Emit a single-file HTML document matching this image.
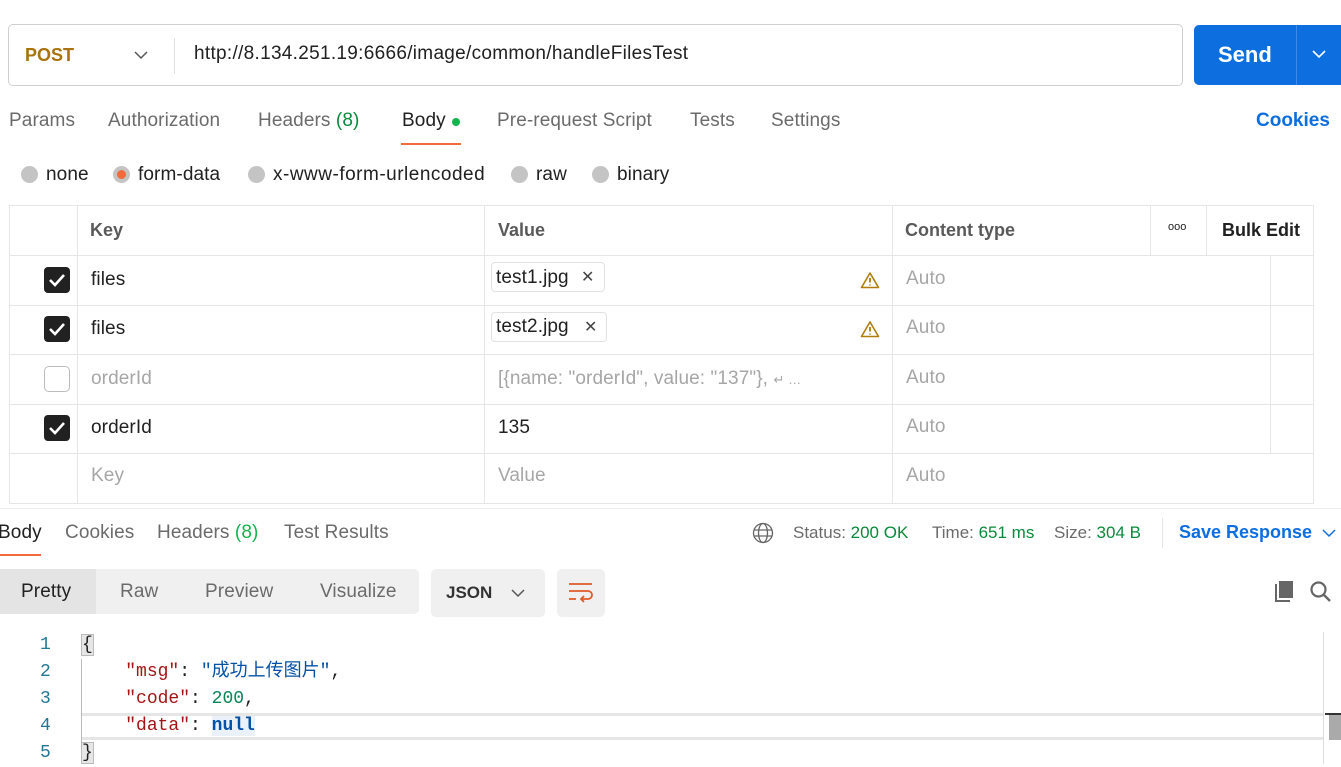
<!DOCTYPE html>
<html><head><meta charset="utf-8"><style>
*{box-sizing:border-box;margin:0;padding:0}
body{width:1341px;height:764px;overflow:hidden;background:#fff;font-family:"Liberation Sans","Noto Sans CJK SC",sans-serif;color:#212121;position:relative}
.a{position:absolute;white-space:nowrap}
.g{color:#6b6b6b}
.gr{color:#0a8a3a}
.ph{color:#a6a6a6}
.cb{position:absolute;width:26px;height:26px;border-radius:4px;background:#212121}
.cb svg{position:absolute;left:4px;top:5px}
.hl{position:absolute;background:#e6e6e6}
.mono{font-family:"Liberation Mono","Noto Sans CJK SC",monospace;font-size:18px}
.t{font-size:19px;letter-spacing:0.1px}
</style></head><body>
<div class="a" style="left:8px;top:24px;width:1175px;height:62px;border:1px solid #d0d0d0;border-radius:5px"></div>
<div class="a" style="left:25px;top:45px;font-size:18px;font-weight:bold;color:#a8720c">POST</div>
<svg class="a" style="left:134px;top:50px" width="14" height="10"><path d="M1 2 L7 8 L13 2" fill="none" stroke="#555" stroke-width="1.5"/></svg>
<div class="a" style="left:174px;top:38px;width:1px;height:36px;background:#e0e0e0"></div>
<div class="a t" style="left:194px;top:43px;letter-spacing:0.3px">http://8.134.251.19:6666/image/common/handleFilesTest</div>
<div class="a" style="left:1194px;top:25px;width:147px;height:60px;background:#0d6ee0;border-radius:5px 0 0 5px"></div>
<div class="a" style="left:1218px;top:42px;font-size:22px;font-weight:bold;color:#fff">Send</div>
<div class="a" style="left:1296px;top:25px;width:1px;height:60px;background:#3d8ae8"></div>
<svg class="a" style="left:1312px;top:49px" width="14" height="10"><path d="M1 2 L7 8 L13 2" fill="none" stroke="#fff" stroke-width="1.6"/></svg>
<div class="a g t" style="left:9px;top:110px">Params</div>
<div class="a g t" style="left:108px;top:110px">Authorization</div>
<div class="a g t" style="left:258px;top:110px">Headers <span class="gr">(8)</span></div>
<div class="a t" style="left:402px;top:110px">Body</div>
<div class="a" style="left:452px;top:118px;width:8px;height:8px;border-radius:50%;background:#12b54b"></div>
<div class="a" style="left:401px;top:143px;width:60px;height:2px;background:#f26b3a"></div>
<div class="a g t" style="left:497px;top:110px">Pre-request Script</div>
<div class="a g t" style="left:690px;top:110px">Tests</div>
<div class="a g t" style="left:771px;top:110px">Settings</div>
<div class="a" style="left:1256px;top:110px;font-size:19px;font-weight:bold;color:#0d6ee0">Cookies</div>
<div class="a" style="left:21px;top:166px;width:17px;height:17px;border-radius:50%;background:#c4c4c4"></div>
<div class="a t" style="left:46px;top:164px">none</div>
<div class="a" style="left:113px;top:166px;width:17px;height:17px;border-radius:50%;background:#c4c4c4"></div>
<div class="a" style="left:117px;top:170px;width:9px;height:9px;border-radius:50%;background:#f26b3a"></div>
<div class="a t" style="left:138px;top:164px">form-data</div>
<div class="a" style="left:248px;top:166px;width:17px;height:17px;border-radius:50%;background:#c4c4c4"></div>
<div class="a t" style="left:273px;top:164px;letter-spacing:0.5px">x-www-form-urlencoded</div>
<div class="a" style="left:511px;top:166px;width:17px;height:17px;border-radius:50%;background:#c4c4c4"></div>
<div class="a t" style="left:536px;top:164px">raw</div>
<div class="a" style="left:592px;top:166px;width:17px;height:17px;border-radius:50%;background:#c4c4c4"></div>
<div class="a t" style="left:617px;top:164px">binary</div>
<div class="a" style="left:9px;top:205px;width:1305px;height:299px;border:1px solid #e6e6e6"></div>
<div class="hl" style="left:9px;top:255px;width:1305px;height:1px"></div>
<div class="hl" style="left:9px;top:305px;width:1305px;height:1px"></div>
<div class="hl" style="left:9px;top:354px;width:1305px;height:1px"></div>
<div class="hl" style="left:9px;top:404px;width:1305px;height:1px"></div>
<div class="hl" style="left:9px;top:453px;width:1305px;height:1px"></div>
<div class="hl" style="left:77px;top:205px;width:1px;height:299px"></div>
<div class="hl" style="left:484px;top:205px;width:1px;height:299px"></div>
<div class="hl" style="left:892px;top:205px;width:1px;height:299px"></div>
<div class="hl" style="left:1150px;top:205px;width:1px;height:50px"></div>
<div class="hl" style="left:1206px;top:205px;width:1px;height:50px"></div>
<div class="hl" style="left:1270px;top:255px;width:1px;height:198px"></div>
<div class="a" style="left:90px;top:220px;font-size:18px;font-weight:bold;color:#5a5a5a">Key</div>
<div class="a" style="left:498px;top:220px;font-size:18px;font-weight:bold;color:#5a5a5a">Value</div>
<div class="a" style="left:905px;top:220px;font-size:18px;font-weight:bold;color:#5a5a5a">Content type</div>
<div class="a" style="left:1168px;top:221px;font-size:11px;letter-spacing:0px;color:#222">ooo</div>
<div class="a" style="left:1222px;top:220px;font-size:18px;font-weight:bold">Bulk Edit</div>
<div class="cb" style="left:44px;top:267px"><svg width="18" height="16"><path d="M2 8 L7 13 L16 3" fill="none" stroke="#fff" stroke-width="2.6"/></svg></div>
<div class="a t" style="left:91px;top:269px">files</div>
<div class="a" style="left:491px;top:262px;width:114px;height:30px;border:1px solid #e2e2e2;border-radius:4px"></div>
<div class="a t" style="left:496px;top:267px">test1.jpg</div>
<div class="a" style="left:581px;top:267px;font-size:16px;color:#444">✕</div>
<div class="cb" style="left:44px;top:316px"><svg width="18" height="16"><path d="M2 8 L7 13 L16 3" fill="none" stroke="#fff" stroke-width="2.6"/></svg></div>
<div class="a t" style="left:91px;top:318px">files</div>
<div class="a" style="left:491px;top:312px;width:116px;height:30px;border:1px solid #e2e2e2;border-radius:4px"></div>
<div class="a t" style="left:496px;top:316px">test2.jpg</div>
<div class="a" style="left:584px;top:317px;font-size:16px;color:#444">✕</div>
<svg class="a" style="left:860px;top:271px" width="20" height="18"><path d="M10 2 L18.5 16.5 H1.5 Z" fill="none" stroke="#b07d0c" stroke-width="1.6" stroke-linejoin="round"/><path d="M10 7 V11.5 M10 13.5 V14.5" stroke="#b07d0c" stroke-width="1.8"/></svg>
<svg class="a" style="left:860px;top:320px" width="20" height="18"><path d="M10 2 L18.5 16.5 H1.5 Z" fill="none" stroke="#b07d0c" stroke-width="1.6" stroke-linejoin="round"/><path d="M10 7 V11.5 M10 13.5 V14.5" stroke="#b07d0c" stroke-width="1.8"/></svg>
<div class="a ph t" style="left:906px;top:268px">Auto</div>
<div class="a ph t" style="left:906px;top:317px">Auto</div>
<div class="a" style="left:44px;top:366px;width:26px;height:26px;border-radius:5px;border:1px solid #bbb"></div>
<div class="a ph t" style="left:91px;top:368px">orderId</div>
<div class="a ph t" style="left:498px;top:368px">[{name: "orderId", value: "137"}, <span style="font-size:13px">↵ …</span></div>
<div class="a ph t" style="left:906px;top:367px">Auto</div>
<div class="cb" style="left:44px;top:415px"><svg width="18" height="16"><path d="M2 8 L7 13 L16 3" fill="none" stroke="#fff" stroke-width="2.6"/></svg></div>
<div class="a t" style="left:91px;top:417px">orderId</div>
<div class="a t" style="left:498px;top:417px">135</div>
<div class="a ph t" style="left:906px;top:416px">Auto</div>
<div class="a ph t" style="left:91px;top:465px">Key</div>
<div class="a ph t" style="left:498px;top:465px">Value</div>
<div class="a ph t" style="left:906px;top:465px">Auto</div>
<div class="hl" style="left:0;top:508px;width:1341px;height:1px;background:#eee"></div>
<div class="a t" style="left:-2px;top:522px">Body</div>
<div class="a" style="left:0;top:554px;width:41px;height:2px;background:#f26b3a"></div>
<div class="a g t" style="left:65px;top:522px">Cookies</div>
<div class="a g t" style="left:157px;top:522px">Headers <span style="color:#12b54b">(8)</span></div>
<div class="a g t" style="left:284px;top:522px">Test Results</div>
<svg class="a" style="left:752px;top:522px" width="22" height="22"><g fill="none" stroke="#666" stroke-width="1.3"><circle cx="11" cy="11" r="9.5"/><ellipse cx="11" cy="11" rx="4.5" ry="9.5"/><path d="M1.5 8 H20.5 M1.5 14 H20.5"/></g></svg>
<div class="a g" style="left:793px;top:523px;font-size:17px">Status: <span class="gr">200 OK</span></div>
<div class="a g" style="left:932px;top:523px;font-size:17px">Time: <span class="gr">651 ms</span></div>
<div class="a g" style="left:1054px;top:523px;font-size:17px">Size: <span class="gr">304 B</span></div>
<div class="a" style="left:1162px;top:518px;width:1px;height:30px;background:#e6e6e6"></div>
<div class="a" style="left:1179px;top:522px;font-size:18px;font-weight:bold;color:#0d6ee0">Save Response</div>
<svg class="a" style="left:1322px;top:528px" width="14" height="10"><path d="M1 2 L7 8 L13 2" fill="none" stroke="#0d6ee0" stroke-width="1.5"/></svg>
<div class="a" style="left:0;top:569px;width:419px;height:45px;background:#f0f0f0;border-radius:0 5px 5px 0"></div>
<div class="a" style="left:0;top:569px;width:96px;height:45px;background:#e4e4e4"></div>
<div class="a t" style="left:21px;top:581px">Pretty</div>
<div class="a g t" style="left:120px;top:581px">Raw</div>
<div class="a g t" style="left:205px;top:581px">Preview</div>
<div class="a g t" style="left:320px;top:581px">Visualize</div>
<div class="a" style="left:431px;top:569px;width:114px;height:48px;background:#f0f0f0;border-radius:5px"></div>
<div class="a" style="left:446px;top:583px;font-size:17px;font-weight:bold;color:#333">JSON</div>
<svg class="a" style="left:511px;top:588px" width="14" height="10"><path d="M1 2 L7 8 L13 2" fill="none" stroke="#555" stroke-width="1.5"/></svg>
<div class="a" style="left:557px;top:569px;width:48px;height:48px;background:#f0f0f0;border-radius:5px"></div>
<svg class="a" style="left:568px;top:582px" width="26" height="22"><g fill="none" stroke="#e05a2a" stroke-width="1.8"><path d="M1 2 H24 M1 9 H20 A4 4 0 0 1 20 17 H13 M16 14 L13 17 L16 20 M1 17 H8"/></g></svg>
<svg class="a" style="left:1272px;top:579px" width="24" height="24"><path d="M4 5 V22 H18" fill="none" stroke="#666" stroke-width="2"/><rect x="7" y="2" width="14" height="17" fill="#666"/></svg>
<svg class="a" style="left:1309px;top:580px" width="24" height="24"><circle cx="9.5" cy="9.5" r="7" fill="none" stroke="#666" stroke-width="2.2"/><path d="M14.5 14.5 L21 21" stroke="#666" stroke-width="2.4"/></svg>
<div class="hl" style="left:82px;top:713px;width:1241px;height:3px"></div>
<div class="hl" style="left:82px;top:737px;width:1241px;height:3px"></div>
<div class="a" style="left:1323px;top:632px;width:1px;height:132px;background:#ddd"></div>
<div class="a" style="left:1329px;top:713px;width:12px;height:27px;background:#aaa"></div>
<div class="a" style="left:1325px;top:713px;width:16px;height:2px;background:#333"></div>
<div class="a" style="left:81px;top:659px;width:1px;height:90px;background:#bbb"></div>
<div class="a mono" style="left:40px;top:632px;color:#237893;line-height:27px;text-align:right">1<br>2<br>3<br>4<br>5</div>
<div class="a mono" style="left:82px;top:632px;line-height:27px;color:#222"><span style="background:#e6e6e6;outline:1px solid #bbb">{</span><br>&nbsp;&nbsp;&nbsp;&nbsp;<span style="color:#a31515">"msg"</span>: <span style="color:#0451a5">"成功上传图片"</span>,<br>&nbsp;&nbsp;&nbsp;&nbsp;<span style="color:#a31515">"code"</span>: <span style="color:#098658">200</span>,<br>&nbsp;&nbsp;&nbsp;&nbsp;<span style="color:#a31515">"data"</span>: <span style="color:#0451a5;font-weight:bold;background:#eaf1fb">null</span><br><span style="background:#e6e6e6;outline:1px solid #bbb">}</span></div>
</body></html>
